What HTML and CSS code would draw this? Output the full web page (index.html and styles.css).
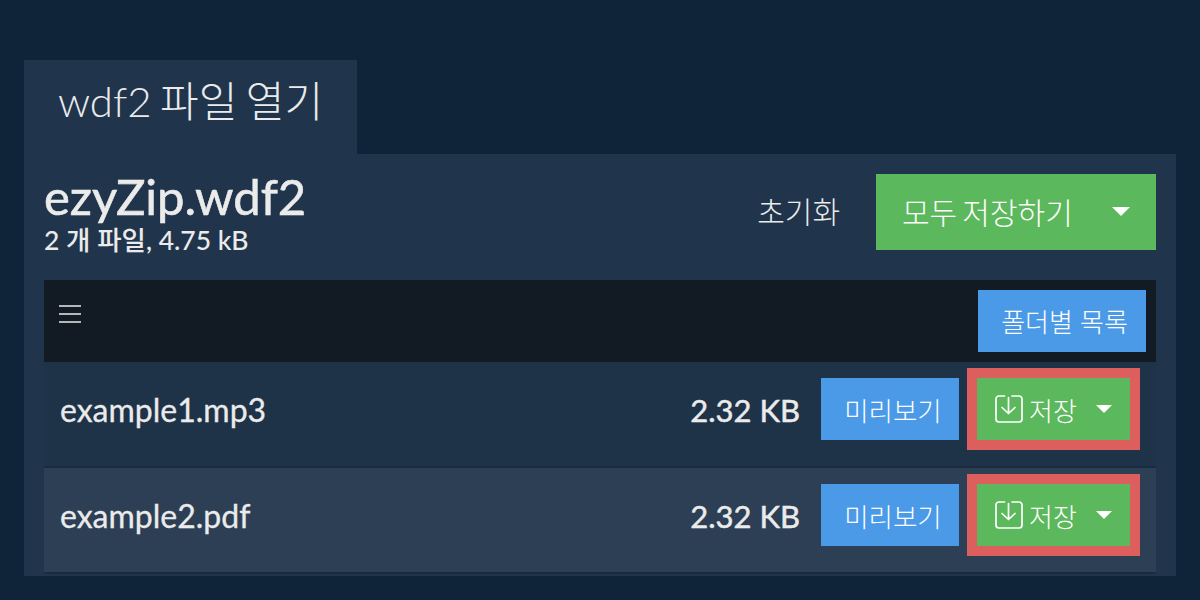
FILE: index.html
```html
<!DOCTYPE html>
<html lang="ko">
<head>
    <meta charset="utf-8">
    <title>wdf2 파일 열기</title>
    <link rel="stylesheet" href="styles.css">
</head>
<body>
    <div class="tab">wdf2 파일 열기</div>
    <div class="panel">
        <!-- Archive header -->
        <div class="archive-header">
            <div class="archive-info">
                <div class="archive-name">ezyZip.wdf2</div>
                <div class="archive-meta">2 개 파일, 4.75 kB</div>
            </div>
            <div class="archive-actions">
                <span class="reset-link">초기화</span>
                <button class="btn btn-green btn-save-all">모두 저장하기<span class="caret caret-large"></span></button>
            </div>
        </div>

        <!-- Toolbar -->
        <div class="toolbar">
            <div class="menu-icon"><span></span><span></span><span></span></div>
            <button class="btn btn-blue btn-folder">폴더별 목록</button>
        </div>

        <!-- File list -->
        <div class="file-row">
            <div class="file-name">example1.mp3</div>
            <div class="file-size">2.32 KB</div>
            <button class="btn btn-blue btn-preview">미리보기</button>
            <div class="highlight">
                <button class="btn btn-green btn-save">
                    <svg class="save-icon" viewBox="0 0 28 28" fill="none" stroke="currentColor" stroke-width="1.7" stroke-linecap="round" stroke-linejoin="round">
                        <path d="M9.500 1H4a3 3 0 0 0-3 3v20a3 3 0 0 0 3 3h20a3 3 0 0 0 3-3V4a3 3 0 0 0-3-3h-7"/>
                        <path d="M13.500 2.500v16M7 12.500l6.500 6 6.500-6"/>
                    </svg>저장<span class="caret"></span>
                </button>
            </div>
        </div>
        <div class="file-row file-row-alt">
            <div class="file-name">example2.pdf</div>
            <div class="file-size">2.32 KB</div>
            <button class="btn btn-blue btn-preview">미리보기</button>
            <div class="highlight">
                <button class="btn btn-green btn-save">
                    <svg class="save-icon" viewBox="0 0 28 28" fill="none" stroke="currentColor" stroke-width="1.7" stroke-linecap="round" stroke-linejoin="round">
                        <path d="M9.500 1H4a3 3 0 0 0-3 3v20a3 3 0 0 0 3 3h20a3 3 0 0 0 3-3V4a3 3 0 0 0-3-3h-7"/>
                        <path d="M13.500 2.500v16M7 12.500l6.500 6 6.500-6"/>
                    </svg>저장<span class="caret"></span>
                </button>
            </div>
        </div>
    </div>
</body>
</html>
```

FILE: styles.css
```css
* {
    margin: 0;
    padding: 0;
    box-sizing: border-box;
    font-family: Lato, "Noto Sans CJK KR", sans-serif;
}

body {
    background: #0f2439;
    color: #ebebeb;
    padding: 60px 24px 0;
    height: 600px;
    overflow: hidden;
}

.tab {
    width: 333px;
    height: 94px;
    padding: 14px 0 0 34px;
    background: #20354c;
    font-size: 42px;
    font-weight: 300;
    line-height: 54px;
    word-spacing: -3px;
    white-space: nowrap;
}

.panel {
    height: 422px;
    padding: 20px 20px 0;
    background: #20354c;
}

/* Archive header */
.archive-header {
    display: flex;
    justify-content: space-between;
    height: 106px;
}

.archive-name {
    margin-top: -2px;
    font-size: 49px;
    font-weight: 400;
    line-height: 48px;
    -webkit-text-stroke: 0.6px #ebebeb;
}

.archive-meta {
    margin-top: 4px;
    font-size: 26.5px;
    font-weight: 500;
    line-height: 32px;
}

.archive-actions {
    display: flex;
    align-items: flex-start;
}

.reset-link {
    margin-right: 36px;
    font-size: 30px;
    font-weight: 300;
    line-height: 74px;
}

/* Buttons */
.btn {
    display: flex;
    align-items: center;
    border: none;
    color: #fff;
    font-size: 28px;
    font-weight: 300;
}

.btn-green {
    background: #5cb85c;
}

.btn-blue {
    background: #4a9ae8;
}

.caret {
    width: 0;
    height: 0;
    margin-left: 19px;
    border-top: 8px solid #fff;
    border-left: 8px solid transparent;
    border-right: 8px solid transparent;
}

.caret-large {
    margin-left: 39px;
    border-top-width: 9px;
    border-left-width: 9px;
    border-right-width: 9px;
}

.btn-save-all {
    width: 280px;
    height: 76px;
    padding: 0 0 2px 26px;
    font-size: 30px;
    word-spacing: -3px;
}

/* Toolbar */
.toolbar {
    display: flex;
    justify-content: space-between;
    height: 82px;
    padding: 10px 10px 0 15px;
    background: #121a23;
}

.menu-icon {
    display: flex;
    flex-direction: column;
    gap: 6px;
    width: 22px;
    margin-top: 15px;
}

.menu-icon span {
    height: 2px;
    background: #b4b7ba;
}

.btn-folder {
    width: 168px;
    height: 62px;
    justify-content: center;
    padding: 0 0 2px 5px;
    font-size: 26px;
}

/* File rows */
.file-row {
    display: flex;
    align-items: flex-start;
    height: 106px;
    padding: 16px 16px 0;
    background: #1e3248;
    border-bottom: 2px solid #1a2b3f;
}

.file-row-alt {
    background: #2c3f55;
}

.file-name {
    flex: 1;
    font-size: 32px;
    font-weight: 400;
    line-height: 64px;
    -webkit-text-stroke: 0.3px #ebebeb;
}

.file-size {
    margin-right: 21px;
    font-size: 31px;
    font-weight: 400;
    line-height: 64px;
    -webkit-text-stroke: 0.5px #ebebeb;
}

.btn-preview {
    width: 138px;
    height: 62px;
    justify-content: center;
    padding-left: 6px;
    font-size: 26.5px;
}

.highlight {
    margin: -10px 0 0 8px;
    border: 10px solid #dc5f5d;
}

.btn-save {
    width: 153px;
    height: 62px;
    padding-left: 18px;
    font-size: 26px;
}

.save-icon {
    width: 28px;
    height: 28px;
    margin-right: 6px;
}
```
